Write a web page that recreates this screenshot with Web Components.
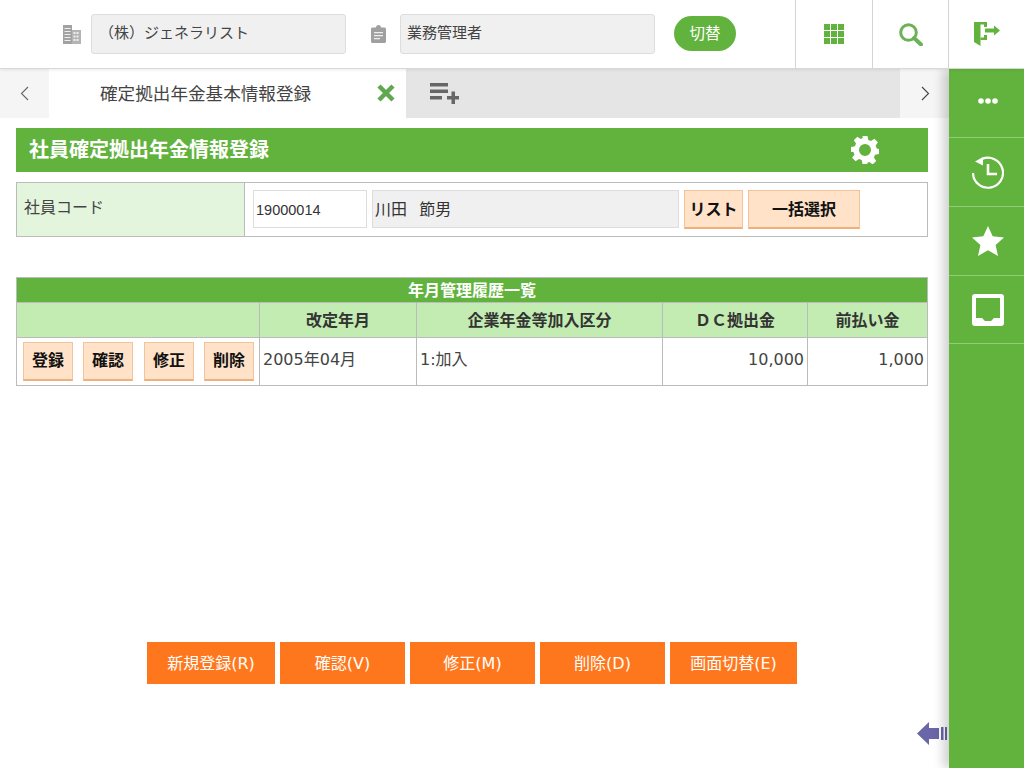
<!DOCTYPE html>
<html lang="ja"><head><meta charset="utf-8"><title>社員確定拠出年金情報登録</title>
<style>
html,body{margin:0;padding:0;background:#fff;}
body{width:1024px;height:768px;overflow:hidden;font-family:"Noto Sans CJK JP","Noto Sans",sans-serif;color:#333;}
</style></head><body>
<app-shell></app-shell>
<script>
const def=(name,html)=>{customElements.define(name,class extends HTMLElement{
  constructor(){super();this.attachShadow({mode:'open'}).innerHTML=html;}
});};
const FONT='"Noto Sans CJK JP","Noto Sans",sans-serif';
const LAT='"DejaVu Sans","Noto Sans CJK JP",sans-serif';
const G='#62b33d';

def('head-field',`<style>
:host{display:flex;align-items:center;box-sizing:border-box;width:255px;height:40px;background:#f0f0f0;border:1px solid #ddd;border-radius:3px;padding:0 0 6px 6px;font-size:15px;color:#444;}
</style><slot></slot>`);

def('head-cell',`<style>
:host{display:flex;align-items:center;justify-content:center;box-sizing:border-box;width:77px;height:68px;border-left:1px solid #d4d4d4;}
</style><slot></slot>`);

def('app-header',`<style>
:host{display:flex;align-items:center;box-sizing:border-box;height:69px;border-bottom:1px solid #d8d8d8;padding-left:63px;background:#fff;position:relative;z-index:3;box-shadow:0 1px 3px rgba(0,0,0,.08);}
.ic{display:block;flex:none}
.b1{margin-right:10px}
.pill{margin-left:19px;width:62px;height:35px;border-radius:18px;background:${G};color:#fff;font-size:15.500px;display:flex;align-items:center;justify-content:center;padding-bottom:4px;box-sizing:border-box;margin-top:-1px}
.cells{margin-left:auto;display:flex}
</style>
<svg class="ic b1" width="18" height="19" viewBox="0 0 18 19"><path fill="#a2a2a2" d="M0 0h9v19H0z"/><path fill="#b4b4b4" d="M9 5h9v14H9z"/><path fill="#eee" d="M1.500 3h6v1h-6zM1.500 6h6v1h-6zM1.500 9h6v1h-6zM1.500 12h6v1h-6zM1.500 15h6v1h-6zM10.500 7h2v2h-2zM13.500 7h2v2h-2zM10.500 10.500h2v2h-2zM13.500 10.500h2v2h-2zM10.500 14h2v2h-2zM13.500 14h2v2h-2z"/></svg>
<head-field style="padding-left:7px">（株）ジェネラリスト</head-field>
<svg class="ic" style="margin:0 14px 0 25px" width="15" height="18" viewBox="0 0 15 18"><path fill="#a0a0a0" d="M1.500 2.500H5C5 1 6 0 7.500 0S10 1 10 2.500h3.500A1.500 1.500 0 0 1 15 4v12.500a1.500 1.500 0 0 1-1.500 1.500h-12A1.500 1.500 0 0 1 0 16.500V4a1.500 1.500 0 0 1 1.500-1.500z"/><path fill="#eee" d="M3 7h9v1.300H3zM3 10h9v1.300H3zM3 13h6v1.300H3z"/></svg>
<head-field>業務管理者</head-field>
<div class="pill">切替</div>
<div class="cells">
<head-cell><svg width="20" height="20" viewBox="0 0 20 20"><path fill="${G}" d="M0 0h6v6H0zM7 0h6v6H7zM14 0h6v6h-6zM0 7h6v6H0zM7 7h6v6H7zM14 7h6v6h-6zM0 14h6v6H0zM7 14h6v6H7zM14 14h6v6h-6z"/></svg></head-cell>
<head-cell style="width:76px"><svg width="24" height="23" viewBox="0 0 24 23"><circle cx="9.500" cy="9.500" r="7.800" fill="none" stroke="#6bb257" stroke-width="3"/><path d="M15 15l7 6.500" stroke="#6bb257" stroke-width="4" stroke-linecap="round"/></svg></head-cell>
<head-cell style="width:76px"><svg width="26" height="24" viewBox="0 0 26 24"><path fill="${G}" d="M0 0h13v5h-3V2.500H6.500V24L0 20z"/><path fill="${G}" d="M10 13h3v5H6.500v-2.500H10z"/><path fill="${G}" d="M11 6.500h9V3.500l6 5-6 5v-3h-9z"/></svg></head-cell>
</div>`);

def('tab-bar',`<style>
:host{display:flex;height:49px;background:#e5e5e5;}
.nav{width:49px;background:#f5f5f5;display:flex;align-items:center;justify-content:center;flex:none}
.tab{width:357px;background:#fff;display:flex;align-items:center;flex:none;box-sizing:border-box;padding:0 11px 2px 51px;font-size:17.600px;color:#444;justify-content:space-between}
.add{flex:1;display:flex;align-items:flex-start;padding:14px 0 0 24px}
svg{display:block}
</style>
<div class="nav"><svg width="9" height="15" viewBox="0 0 9 15"><path d="M8 1L1.500 7.500 8 14" fill="none" stroke="#666" stroke-width="1.100"/></svg></div>
<div class="tab"><span>確定拠出年金基本情報登録</span><svg width="18" height="18" viewBox="0 0 18 18"><path d="M2 2l14 14M16 2L2 16" stroke="#5fa850" stroke-width="4.500"/></svg></div>
<div class="add"><svg width="29" height="21" viewBox="0 0 29 21"><path fill="#666" d="M0 0h18v3.500H0zM0 6.500h18V10H0zM0 13h12v3.500H0zM21.500 8.500h3.500V13h4v3.500h-4V21h-3.500v-4.500H17V13h4.500z"/></svg></div>
<div class="nav"><svg style="margin-left:2px" width="9" height="15" viewBox="0 0 9 15"><path d="M1 1l6.500 6.500L1 14" fill="none" stroke="#444" stroke-width="1.100"/></svg></div>`);

def('title-bar',`<style>
:host{display:flex;align-items:center;justify-content:space-between;height:44px;background:${G};color:#fff;font-size:20px;font-weight:700;padding:0 49px 0 13px;box-sizing:border-box;}
svg{display:block}
span{position:relative;top:-2px}
</style><span><slot></slot></span>
<svg width="28" height="28" viewBox="0 0 28 28"><g fill="#fff"><path fill-rule="evenodd" d="M11.500 0h5l.8 4 2.700 1.100 3.400-2.300 3.500 3.500-2.300 3.400L25.700 12.500l2.300.5v5l-4 .8-1.100 2.700 2.300 3.400-3.500 3.500-3.400-2.300-2.300 1L16.500 28h-5l-.8-3.900-2.700-1.100-3.400 2.300-3.500-3.500 2.300-3.400-1.100-2.700L0 16v-5l3.900-.8L5 7.500 2.800 4.300l3.500-3.500L9.700 3l2-.9zM14 8a6 6 0 1 0 0 12 6 6 0 0 0 0-12z"/></g></svg>`);

def('peach-btn',`<style>
:host{display:inline-flex;align-items:center;justify-content:center;box-sizing:border-box;background:#ffe2c8;border:1px solid #f3c39b;border-bottom:2px solid #eeb07c;color:#111;font-weight:700;font-size:16px;flex:none;padding-bottom:3px;white-space:nowrap;}
</style><slot></slot>`);

def('emp-form',`<style>
:host{display:flex;box-sizing:border-box;height:55px;border:1px solid #bbb;margin-top:10px;font-size:16px;color:#444;}
.l{width:228px;background:#e3f5dc;border-right:1px solid #bbb;padding:11px 0 0 7px;box-sizing:border-box;flex:none;line-height:24px}
.r{flex:1;display:flex;align-items:flex-start;padding-top:7px;padding-left:8px;}
.code{box-sizing:border-box;width:114px;height:38px;background:#fff;border:1px solid #ddd;font:14.500px "Liberation Sans",sans-serif;padding:1px 0 0 2px;display:flex;align-items:center;color:#333}
.name{box-sizing:border-box;width:307px;height:38px;margin-left:5px;background:#f0f0f0;border:1px solid #ddd;padding:0 0 3px 2px;display:flex;align-items:center;font:16px ${LAT};word-spacing:1px;color:#333;white-space:pre}
peach-btn{height:39px;}
</style>
<div class="l">社員コード</div>
<div class="r"><div class="code">19000014</div><div class="name">川田&nbsp;&nbsp;節男</div>
<peach-btn style="width:59px;margin-left:5px">リスト</peach-btn><peach-btn style="width:112px;margin-left:5px">一括選択</peach-btn></div>`);

def('history-table',`<style>
:host{display:block;margin-top:40px;}
table{border-collapse:collapse;width:911px;table-layout:fixed;font-size:16px;color:#333;line-height:20px}
td,th{border:1px solid #bbb;padding:0;box-sizing:border-box}
.cap{background:${G};color:#fff;height:25px;font-size:16px;font-weight:700;text-align:center;padding-bottom:3px}
.hd th{background:#c2ecb2;height:35px;font-weight:700;padding-bottom:3px;color:#333;font-size:16px}
.row td{height:48px;padding-bottom:4px;font-family:${LAT};color:#444}
.ops{display:flex;padding:0 0 0 6px;height:39px;margin-top:3px}
.ops peach-btn{width:50px;height:39px;padding-bottom:4px;font-family:${FONT}}
.t{padding-left:3px}
.e{text-align:right;padding-right:3px}
</style>
<table><colgroup><col style="width:243px"><col style="width:157px"><col style="width:246px"><col style="width:145px"><col style="width:120px"></colgroup>
<tr><td class="cap" colspan="5">年月管理履歴一覧</td></tr>
<tr class="hd"><th></th><th>改定年月</th><th>企業年金等加入区分</th><th>ＤＣ拠出金</th><th>前払い金</th></tr>
<tr class="row"><td><div class="ops"><peach-btn>登録</peach-btn><peach-btn style="margin-left:10px">確認</peach-btn><peach-btn style="margin-left:11px">修正</peach-btn><peach-btn style="margin-left:10px">削除</peach-btn></div></td>
<td class="t">2005年04月</td><td class="t">1:加入</td><td class="e">10,000</td><td class="e">1,000</td></tr></table>`);

def('action-btn',`<style>
:host{display:flex;align-items:center;justify-content:center;box-sizing:border-box;height:42px;width:125px;background:#ff771c;color:#fff;font:16px ${LAT};padding-bottom:3px;flex:none}
</style><slot></slot>`);

def('action-bar',`<style>
:host{display:flex;gap:5px;padding-left:131px;margin-top:256px}
</style><slot></slot>`);

def('rail-item',`<style>
:host{display:flex;align-items:center;justify-content:center;box-sizing:border-box;height:69px;padding-left:3px;border-bottom:1px solid #93cb7a;}
</style><slot></slot>`);

def('side-rail',`<style>
:host{display:block;width:75px;background:${G};box-shadow:-6px 0 10px rgba(0,0,0,.18);position:relative;z-index:2;height:100%}
svg{display:block}
</style>
<rail-item><svg style="margin-bottom:4px" width="20" height="6" viewBox="0 0 20 6"><circle cx="3" cy="3" r="2.800" fill="#fff"/><circle cx="10" cy="3" r="2.800" fill="#fff"/><circle cx="17" cy="3" r="2.800" fill="#fff"/></svg></rail-item>
<rail-item><svg width="32" height="33" viewBox="0 0 32 33"><path d="M10 3A15 15 0 1 1 1 17" fill="none" stroke="#fff" stroke-width="2.200"/><path fill="#fff" d="M3 5.500L11 1v8.500z"/><path d="M16 8v10h9" fill="none" stroke="#fff" stroke-width="2.600"/></svg></rail-item>
<rail-item><svg width="32" height="30" viewBox="0 0 32 30"><path fill="#fff" d="M16 0l4.700 10.300 11.300 1.200-8.400 7.500 2.400 11L16 24.300 6 30l2.400-11L0 11.500l11.300-1.200z"/></svg></rail-item>
<rail-item style="height:68px"><svg width="32" height="32" viewBox="0 0 32 32"><path fill="#fff" fill-rule="evenodd" d="M3 0h26a3 3 0 0 1 3 3v26a3 3 0 0 1-3 3H3a3 3 0 0 1-3-3V3a3 3 0 0 1 3-3zM4 4v20h6l3 3h6l3-3h6V4z"/></svg></rail-item>`);

def('app-shell',`<style>
:host{display:grid;grid-template-columns:949px 75px;grid-template-rows:69px 699px;width:1024px;height:768px;position:relative;overflow:hidden;font-family:${FONT}}
app-header{grid-column:1/3}
.content{padding:10px 21px 0 16px;}
.arrow{position:absolute;left:917px;top:721px;z-index:1;display:block}
</style>
<app-header></app-header>
<main><tab-bar></tab-bar><div class="content">
<title-bar>社員確定拠出年金情報登録</title-bar>
<emp-form></emp-form>
<history-table></history-table>
<action-bar><action-btn style="width:128px">新規登録(R)</action-btn><action-btn>確認(V)</action-btn><action-btn>修正(M)</action-btn><action-btn>削除(D)</action-btn><action-btn style="width:127px">画面切替(E)</action-btn></action-bar>
</div></main>
<side-rail></side-rail>
<svg class="arrow" width="30" height="25" viewBox="0 0 30 25"><path fill="#6a66a8" d="M0 12.500L12 1v6h10v11H12v6z"/><path fill="#6a66a8" d="M24 6h2.500v13H24zM28 6h2v13h-2z"/></svg>`);
</script>
</body></html>
